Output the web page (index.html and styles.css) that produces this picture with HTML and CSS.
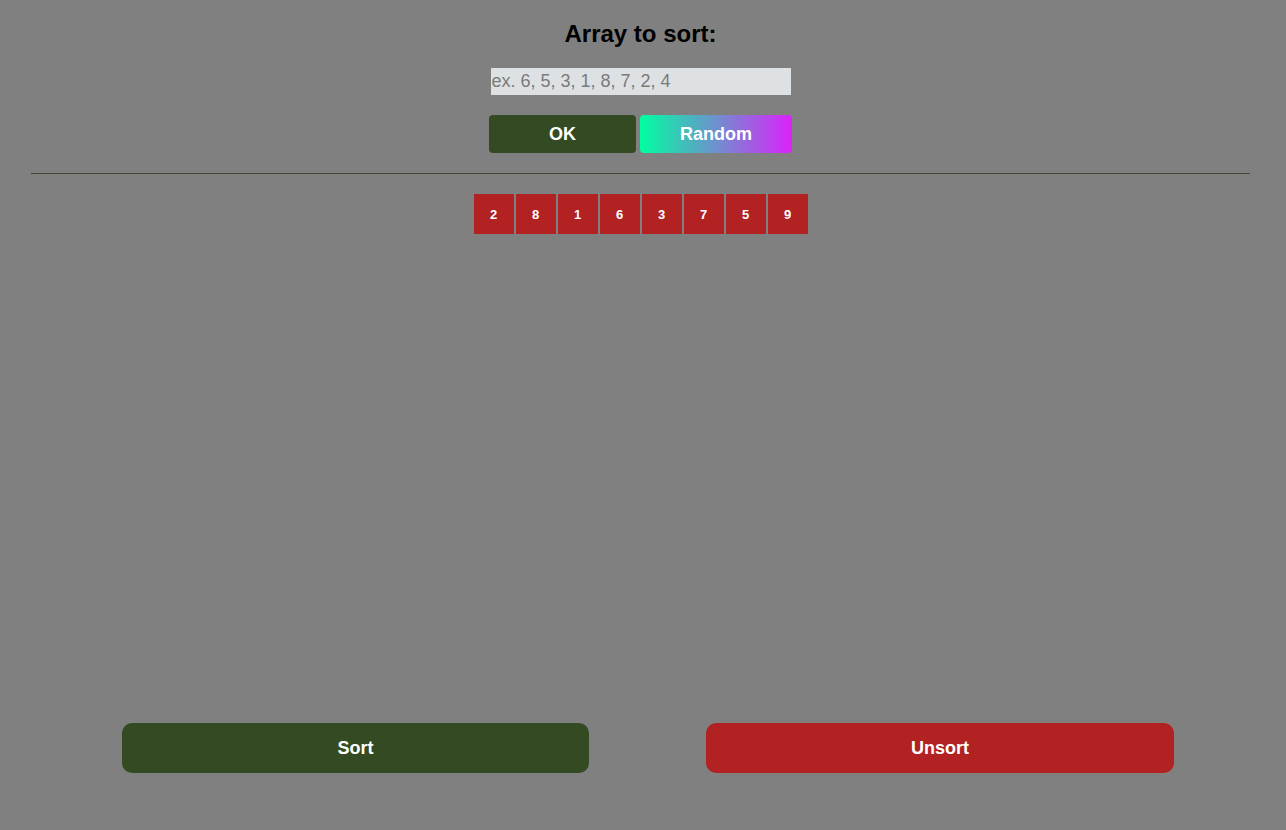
FILE: index.html
```html
<!DOCTYPE html>
<html>
<head>
<meta charset="utf-8">
<link rel="stylesheet" href="styles.css">
</head>
<body>
<div class="page">
  <h1 class="title">Array to sort:</h1>
  <input class="array-input" type="text" placeholder="ex. 6, 5, 3, 1, 8, 7, 2, 4">
  <div class="controls">
    <button class="btn btn-ok">OK</button>
    <button class="btn btn-random">Random</button>
  </div>
  <hr class="divider">
  <div class="bars">
    <div class="bar">2</div>
    <div class="bar">8</div>
    <div class="bar">1</div>
    <div class="bar">6</div>
    <div class="bar">3</div>
    <div class="bar">7</div>
    <div class="bar">5</div>
    <div class="bar">9</div>
  </div>
  <div class="spacer"></div>
  <div class="actions">
    <button class="action action-sort">Sort</button>
    <button class="action action-unsort">Unsort</button>
  </div>
</div>
</body>
</html>
```
FILE: styles.css
```css
html, body {
  margin: 0;
  padding: 0;
  background: #808080;
  font-family: "Liberation Sans", Arial, sans-serif;
}
.page {
  width: 1281px;
  height: 830px;
  display: flex;
  flex-direction: column;
  align-items: center;
  padding-top: 20px;
  padding-bottom: 57px;
  box-sizing: border-box;
}
.title {
  margin: 0;
  font-size: 24px;
  line-height: 28px;
  font-weight: bold;
  color: #000;
}
.array-input {
  margin-top: 20px;
  width: 300px;
  height: 27px;
  box-sizing: border-box;
  border: none;
  outline: none;
  background: #dee1e4;
  padding: 0 1px;
  font-family: "Liberation Sans", Arial, sans-serif;
  font-size: 18px;
  color: #333;
}
.array-input::placeholder {
  color: #7a7a7a;
}
.controls {
  margin-top: 20px;
  display: flex;
  gap: 4px;
}
.btn {
  height: 38px;
  border: none;
  border-radius: 4px;
  color: #fff;
  font-family: "Liberation Sans", Arial, sans-serif;
  font-size: 18px;
  font-weight: bold;
  padding: 0;
}
.btn-ok {
  width: 147px;
  background: #334a22;
}
.btn-random {
  width: 152px;
  background: linear-gradient(to right, #00ffa0, #dc22fb);
}
.divider {
  align-self: stretch;
  margin: 20px 31px 0 31px;
  border: none;
  height: 1px;
  background: #3d4a33;
}
.bars {
  margin-top: 20px;
  display: flex;
  gap: 2px;
}
.bar {
  width: 40px;
  height: 40px;
  background: #b22222;
  color: #fff;
  font-size: 13px;
  font-weight: bold;
  display: flex;
  align-items: center;
  justify-content: center;
}
.spacer {
  flex: 1;
}
.actions {
  align-self: stretch;
  display: flex;
  gap: 117px;
  padding-left: 122px;
}
.action {
  height: 50px;
  border: none;
  border-radius: 10px;
  color: #fff;
  font-family: "Liberation Sans", Arial, sans-serif;
  font-size: 18px;
  font-weight: bold;
  padding: 0;
}
.action-sort {
  width: 467px;
  background: #334a22;
}
.action-unsort {
  width: 468px;
  background: #b22222;
}
```
